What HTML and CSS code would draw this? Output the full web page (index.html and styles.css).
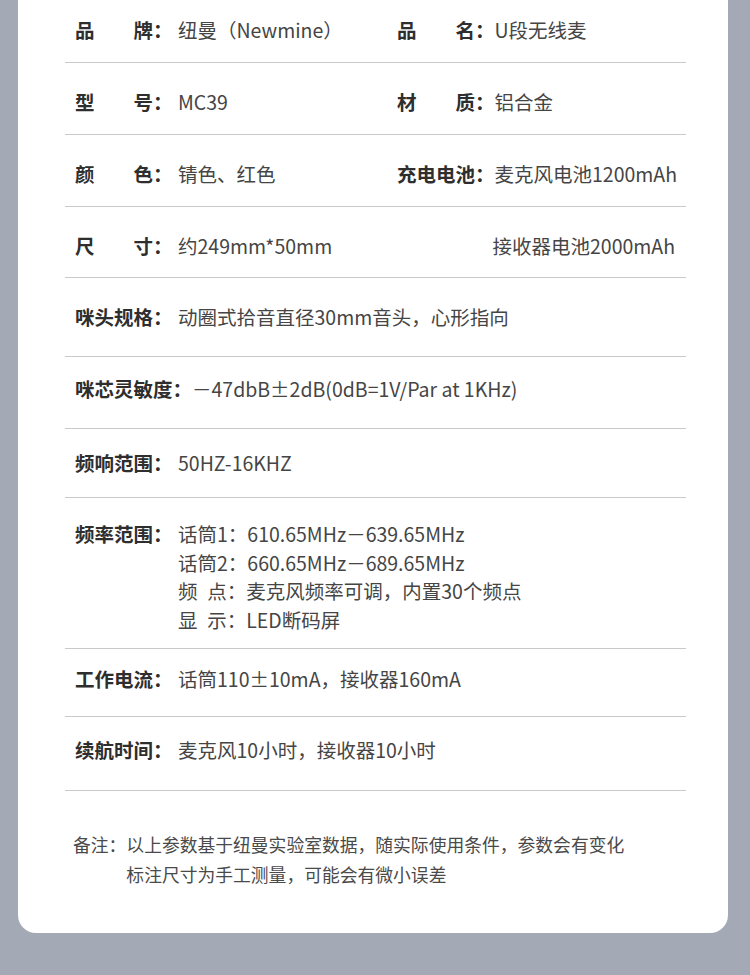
FILE: index.html
```html
<!DOCTYPE html>
<html lang="zh-CN">
<head>
<meta charset="utf-8">
<title>纽曼 U段无线麦 参数</title>
<link rel="stylesheet" href="styles.css">
</head>
<body>
<div class="card">
  <div class="specs">
    <div class="row pair">
      <div class="item"><span class="k">品&emsp;&emsp;牌：</span><span class="v">纽曼（Newmine）</span></div>
      <div class="item item-r"><span class="k">品&emsp;&emsp;名：</span><span class="v">U段无线麦</span></div>
    </div>
    <div class="row pair">
      <div class="item"><span class="k">型&emsp;&emsp;号：</span><span class="v">MC39</span></div>
      <div class="item item-r"><span class="k">材&emsp;&emsp;质：</span><span class="v">铝合金</span></div>
    </div>
    <div class="row pair">
      <div class="item"><span class="k">颜&emsp;&emsp;色：</span><span class="v">锖色、红色</span></div>
      <div class="item item-r"><span class="k">充电电池：</span><span class="v">麦克风电池1200mAh</span></div>
    </div>
    <div class="row pair">
      <div class="item"><span class="k">尺&emsp;&emsp;寸：</span><span class="v">约249mm*50mm</span></div>
      <div class="item item-r"><span class="k"></span><span class="v">接收器电池2000mAh</span></div>
    </div>
    <div class="row">
      <div class="item"><span class="k">咪头规格：</span><span class="v">动圈式拾音直径30mm音头，心形指向</span></div>
    </div>
    <div class="row raise">
      <div class="item"><span class="k">咪芯灵敏度：</span><span class="v">－47dbB±2dB(0dB=1V/Par at 1KHz)</span></div>
    </div>
    <div class="row">
      <div class="item"><span class="k">频响范围：</span><span class="v">50HZ-16KHZ</span></div>
    </div>
    <div class="row multi">
      <div class="item">
        <span class="k">频率范围：</span>
        <div class="v lines">
          <span>话筒1：610.65MHz－639.65MHz</span>
          <span>话筒2：660.65MHz－689.65MHz</span>
          <span>频&ensp;点：麦克风频率可调，内置30个频点</span>
          <span>显&ensp;示：LED断码屏</span>
        </div>
      </div>
    </div>
    <div class="row raise">
      <div class="item"><span class="k">工作电流：</span><span class="v">话筒110±10mA，接收器160mA</span></div>
    </div>
    <div class="row raise">
      <div class="item"><span class="k">续航时间：</span><span class="v">麦克风10小时，接收器10小时</span></div>
    </div>
  </div>
  <div class="note">
    <span class="note-k">备注：</span>
    <div class="note-lines">
      <span>以上参数基于纽曼实验室数据，随实际使用条件，参数会有变化</span>
      <span>标注尺寸为手工测量，可能会有微小误差</span>
    </div>
  </div>
</div>
</body>
</html>
```

FILE: styles.css
```css
html {
  background: #a3aab5;
}

body {
  margin: 0;
  height: 975px;
  overflow: hidden;
  background: #a3aab5;
  font-family: "Noto Sans CJK SC", "Noto Sans", sans-serif;
}

.card {
  width: 710px;
  margin: -9px 0 0 18px;
  padding: 0 42px 44px 47px;
  box-sizing: border-box;
  background: #ffffff;
  border-radius: 0 0 18px 18px;
}

.specs {
  display: grid;
  grid-template-rows: 72px 72px 72px 71px 79px 72px 69px 151px 68px 74px;
}

.row {
  display: flex;
  align-items: center;
  padding-left: 10px;
  border-bottom: 1px solid #c9c9c9;
  box-sizing: border-box;
  font-size: 19.5px;
  line-height: 28.5px;
}

.row.pair {
  display: grid;
  grid-template-columns: 322px 1fr;
  align-items: center;
  padding-top: 8px;
}

.row.multi {
  padding-top: 8px;
}

.row.raise {
  padding-bottom: 6px;
}

.item {
  display: flex;
  align-items: flex-start;
  white-space: nowrap;
}

.k {
  min-width: 103px;
  font-weight: 700;
  color: #2e2e2e;
}

.item-r .k {
  min-width: 95.5px;
}

.v {
  color: #454545;
}

.lines {
  display: flex;
  flex-direction: column;
}

.note {
  display: flex;
  padding: 38px 0 0 8px;
  font-size: 17.8px;
  line-height: 30px;
  color: #4a4a4a;
}

.note-lines {
  display: flex;
  flex-direction: column;
}
```
